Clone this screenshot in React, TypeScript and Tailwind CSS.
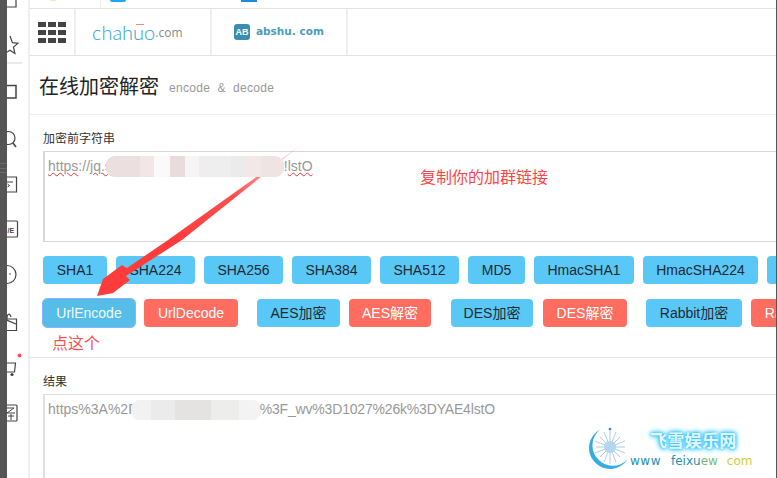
const cjk = "font-['Liberation_Sans','Noto_Sans_CJK_SC',sans-serif]";

function SidebarIcons() {
  return (
    <svg width="21" height="478" viewBox="7 0 21 478" fill="none" stroke="#444" strokeWidth="1.2" className="block">
      {/* doc */}
      <path d="M3 -4h13v11h-13" />
      {/* star */}
      <path d="M10 36l2.4 6.6 5.6.5-4.5 4 1.4 6.4-5-3.2-4 2.5" />
      <path d="M7 63h15" stroke="#ddd" />
      {/* bookmark box */}
      <path d="M3 85.5h13v12.5h-13" strokeWidth="1.5" />
      {/* search */}
      <circle cx="8.5" cy="138" r="6.5" />
      <path d="M13 143l3 4" strokeWidth="1.5" />
      {/* play box */}
      <path d="M3 177h13.5v15h-13.5" />
      <path d="M7 182h6M7.5 184l2 1.5-2 1.5" strokeWidth="1" />
      {/* live box */}
      <path d="M3 221h13.5a1 1 0 0 1 1 1v14a1 1 0 0 1-1 1h-13.5" />
      <text x="7.5" y="233" fontSize="7" fontWeight="700" fill="#444" stroke="none" fontFamily="Liberation Sans">/E</text>
      {/* face */}
      <circle cx="7" cy="274.500" r="9" />
      <circle cx="10" cy="274" r="0.8" fill="#444" stroke="none" />
      {/* bag */}
      <path d="M3 319h13.500v11.500h-13.500M4 319l12 5" />
      <path d="M7 319c0-6 3-6 4-2" />
      {/* cart */}
      <path d="M3 363h12.500l-1 9h-9" />
      <circle cx="12" cy="374.500" r="1.600" fill="#444" stroke="none" />
      <circle cx="19.500" cy="355.500" r="2" fill="#ff4d5e" stroke="none" />
      {/* receipt box */}
      <path d="M3 405h13a1 1 0 0 1 1 1v14a1 1 0 0 1-1 1h-13" />
      <path d="M7 408h7l-7 5h8M8 416h6M11 414v6" strokeWidth="1" />
    </svg>
  );
}

function Watermark() {
  return (
    <div className="absolute right-[1px] bottom-0 w-[188px] h-[61px] bg-white">
      <svg width="62" height="56" viewBox="0 0 62 56" className="absolute left-0 top-[3px]">
        <path d="M12 9.500A21 21 0 1 0 39.500 39.600A20.420 20.420 0 1 1 12 9.500z" fill="#35ace6" />
        <g stroke="#9dbfe0" strokeWidth="0.8">
          <path d="M22 10v34M8 27h29M12 17l20 20M32 17L12 37M16 12l12 30M28 12L16 42M7 21l30 12M37 21L7 33" />
        </g>
        <circle cx="22" cy="27" r="6" fill="#b4d6f0" />
        <circle cx="22" cy="9" r="1.300" fill="#2f88c9" />
      </svg>
      <div className="absolute left-[62px] top-[11px] text-[17px] leading-[24px] font-bold text-[#e6f8ff] tracking-[0.3px] [text-shadow:0_0_2px_#2fc4ff,0_0_4px_#2fc4ff,0_0_5px_#2fc4ff,0_0_7px_#6fdcff] font-['Noto_Sans_CJK_SC',sans-serif] whitespace-nowrap">
        飞雪娱乐网
      </div>
      <div className="absolute left-[42px] top-[35px] text-[12px] leading-[18px] whitespace-nowrap font-['DejaVu_Sans',sans-serif] flex">
        <span className="text-[#1f8fb5] w-[41px] tracking-[0.5px]">www</span>
        <span className="text-[#1f8fb5]">feixu</span>
        <span className="text-[#7ab87a]">ew</span>
        <span className="text-[#c9cf3c] ml-[9px]">com</span>
      </div>
    </div>
  );
}

const btnBase = `h-[28px] shrink-0 rounded-[4px] text-[14px] leading-[28px] text-center ${cjk}`;
const blue = `${btnBase} bg-[#5ac8f7] text-[#1f2a33]`;
const red = `${btnBase} bg-[#ff6c60] text-[#fff]`;

export default function App() {
  const row1 = [
    ["SHA1", "w-[64px]"],
    ["SHA224", "w-[79px]"],
    ["SHA256", "w-[79px]"],
    ["SHA384", "w-[79px]"],
    ["SHA512", "w-[79px]"],
    ["MD5", "w-[57px]"],
    ["HmacSHA1", "w-[100px]"],
    ["HmacSHA224", "w-[115px]"],
    ["", "w-[40px]"],
  ];

  return (
    <div className={`relative flex w-[777px] h-[478px] overflow-hidden bg-white ${cjk}`}>
      {/* dark window edge */}
      <div className="relative w-[7px] shrink-0 bg-[#555555]">
        <div className="absolute left-0 top-[163px] w-[7px] h-[10px] border-y border-[#6b6b6b] flex items-center">
          <div className="w-full h-px bg-[#6b6b6b]" />
        </div>
      </div>

      <div className="w-[21px] shrink-0">
        <SidebarIcons />
      </div>

      <div className="flex-1 min-w-0 flex flex-col border-l-2 border-[#eeeeee] border-r border-r-[#555555] mr-0 overflow-hidden">
        {/* cut off tab strip */}
        <div className="relative h-[8px] shrink-0">
          <div className="absolute left-[20px] top-0 w-[6px] h-[1px] bg-[#fde4b8]" />
          <div className="absolute left-[80px] top-0 w-[16px] h-[2px] rounded-b bg-[#1ea7f2]" />
          <div className="absolute left-[211px] top-0 w-[16px] h-[2px] bg-[#1e88e5]" />
          <div className="absolute left-[70px] top-0 w-px h-[8px] bg-[#eeeeee]" />
        </div>

        {/* site switcher */}
        <div className="flex h-[48px] shrink-0 border-y border-[#e3e3e3]">
          <div className="w-[46px] shrink-0 flex items-center justify-center border-r-2 border-[#eeeeee]">
            <div className="grid grid-cols-3 gap-x-[2px] gap-y-[3px]">
              {Array.from({ length: 9 }).map((_, i) => (
                <div key={i} className="w-[8px] h-[5px] bg-[#444444]" />
              ))}
            </div>
          </div>
          <div className="w-[136px] shrink-0 flex items-center pl-[16px] pb-[1px] border-r-2 border-[#eeeeee]">
            <span className="relative text-[20px] leading-[24px] text-[#2ea3d6] font-['Lato',sans-serif] font-light">
              chahuo
              <span className="absolute left-[44px] top-[4px] w-[8px] h-[1px] bg-[#f08a7a]" />
            </span>
            <span className="text-[12px] leading-[24px] mt-[3px] text-[#888888] font-['Open_Sans',sans-serif]">.com</span>
          </div>
          <div className="w-[136px] shrink-0 flex items-center pl-[22px] gap-[6px] border-r-2 border-[#eeeeee]">
            <div className="w-[16px] h-[16px] rounded-[3px] bg-[#3a8fb0] text-[9px] leading-[16px] font-bold text-white text-center">AB</div>
            <span className="text-[10.500px] font-bold text-[#4a9dbb] whitespace-nowrap font-['DejaVu_Sans',sans-serif]">abshu. com</span>
          </div>
        </div>

        {/* title */}
        <div className="h-[59px] shrink-0 flex items-center pl-[9px] pt-[2px] border-b border-[#eeeeee]">
          <h1 className="text-[20px] font-normal text-[#222222] leading-[26px] font-['Noto_Sans_CJK_SC',sans-serif]">在线加密解密</h1>
          <span className="ml-[10px] mt-[3px] text-[12px] text-[#999999] tracking-[0.3px] whitespace-pre">encode  &amp;  decode</span>
        </div>

        {/* input panel */}
        <div className="h-[128px] shrink-0 pl-[13px] pt-[14px]">
          <div className="h-[22px] text-[12px] leading-[18px] text-[#333333] font-['Noto_Sans_CJK_SC',sans-serif]">加密前字符串</div>
          <div className="relative h-[91px] border-t border-l-2 border-b border-[#d8d8d8] pl-[3px] pt-[4px] text-[14px] leading-[20px] text-[#999999]">
            <div className="flex whitespace-nowrap">
              <span className="underline decoration-wavy decoration-[#e03a3a] decoration-[1px]">https</span>
              <span>://</span>
              <span className="underline decoration-wavy decoration-[#e03a3a] decoration-[1px]">jq.s</span>
              <div className="relative z-[1] flex overflow-hidden rounded-[9px] w-[178px] h-[21px] -ml-[6px] bg-[#f1eded]">
                <div className="w-[34px] bg-[#ebdfe0]" />
                <div className="w-[14px] bg-[#f3e6e6]" />
                <div className="w-[16px] bg-[#fbf9f9]" />
                <div className="w-[15px] bg-[#e9dcdc]" />
                <div className="w-[14px] bg-[#f6f4f4]" />
                <div className="w-[32px] bg-[#efeeee]" />
                <div className="w-[15px] bg-[#ebebeb]" />
                <div className="w-[15px] bg-[#f3e8e8]" />
                <div className="w-[23px] bg-[#efe4e4]" />
              </div>
              <span>!</span>
              <span className="underline decoration-wavy decoration-[#e03a3a] decoration-[1px]">lstO</span>
            </div>
          </div>
        </div>

        {/* button rows */}
        <div className="h-[115px] shrink-0 border-b border-[#e5e5e5] pl-[13px] pt-[13px]">
          <div className="flex gap-[9px]">
            {row1.map(([label, w], i) => (
              <div key={i} className={`${blue} ${w}`}>{label}</div>
            ))}
          </div>
          <div className="flex mt-[15px]">
            <div className={`${btnBase} w-[92px] bg-[#55bde8] text-[#eefaff] outline outline-[1px] outline-[#8ab4f8]`}>UrlEncode</div>
            <div className={`${red} w-[94px] ml-[9px]`}>UrlDecode</div>
            <div className={`${blue} w-[83px] ml-[19px]`}>AES加密</div>
            <div className={`${red} w-[82px] ml-[9px]`}>AES解密</div>
            <div className={`${blue} w-[82px] ml-[20px]`}>DES加密</div>
            <div className={`${red} w-[84px] ml-[10px]`}>DES解密</div>
            <div className={`${blue} w-[96px] ml-[19px]`}>Rabbit加密</div>
            <div className={`${red} w-[96px] ml-[9px]`}>Rabbit解密</div>
          </div>
          <div className="mt-[5px] ml-[9px] text-[16px] leading-[20px] text-[#ff5050] font-['Noto_Sans_CJK_SC',sans-serif]">点这个</div>
        </div>

        {/* result panel */}
        <div className="flex-1 pl-[13px] pt-[14px]">
          <div className="h-[22px] text-[12px] leading-[18px] text-[#333333] font-['Noto_Sans_CJK_SC',sans-serif]">结果</div>
          <div className="h-[100px] border-t border-l-2 border-[#e0e0e0] pl-[3px] pt-[4px] text-[14px] leading-[20px] text-[#999999]">
            <div className="flex whitespace-nowrap">
              <span>https%3A%2F</span>
              <div className="flex overflow-hidden rounded-[9px] w-[130px] h-[20px] -ml-[6px] mr-[-1px] mt-[1px] bg-[#eeeeee]">
                <div className="w-[20px] bg-[#f2f2f2]" />
                <div className="w-[24px] bg-[#ebebeb]" />
                <div className="w-[36px] bg-[#e4e3e2]" />
                <div className="w-[28px] bg-[#ededec]" />
                <div className="w-[22px] bg-[#f3f3f3]" />
              </div>
              <span className="tracking-[-0.18px]">%3F_wv%3D1027%26k%3DYAE4lstO</span>
            </div>
          </div>
        </div>
      </div>

      {/* annotation layer */}
      <svg width="777" height="478" viewBox="0 0 777 478" className="absolute inset-0 pointer-events-none">
        <defs>
          <linearGradient id="shaft" x1="301" y1="145" x2="170" y2="245" gradientUnits="userSpaceOnUse">
            <stop offset="0" stopColor="#ff3b3b" stopOpacity="0.1" />
            <stop offset="0.5" stopColor="#ff3b3b" stopOpacity="0.9" />
            <stop offset="1" stopColor="#ff3b3b" />
          </linearGradient>
        </defs>
        <path d="M301 145L168 240L127 268L122 265L103 279L97 296L113 293L130 280L126 276L182 240z" fill="url(#shaft)" />
      </svg>
      <div className="absolute left-[420px] top-[166px] text-[16px] leading-[20px] text-[#ff4444] font-['Noto_Sans_CJK_SC',sans-serif]">复制你的加群链接</div>
      <Watermark />
    </div>
  );
}
